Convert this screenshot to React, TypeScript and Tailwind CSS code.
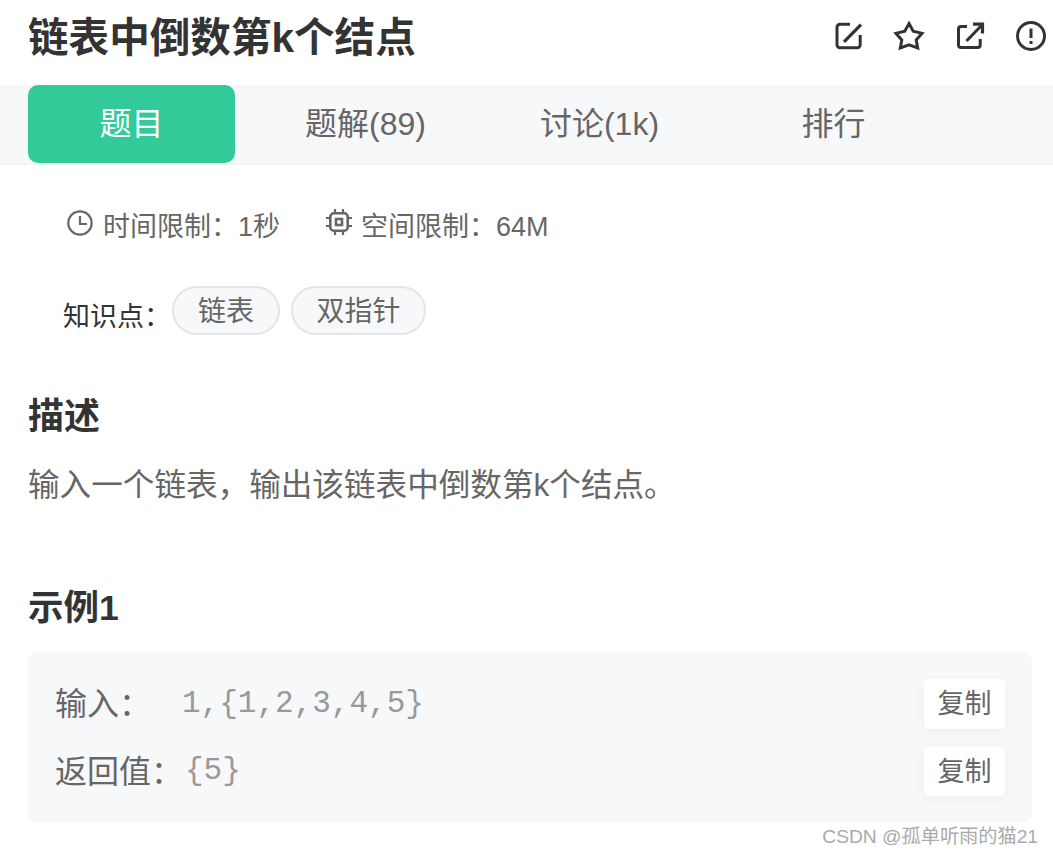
import React from "react";

function IconEdit() {
  return (
    <svg width="32" height="32" viewBox="0 0 32 32" fill="none" stroke="#333" strokeWidth="3">
      <path d="M18 4.2H8a3 3 0 0 0-3 3V24.8a3 3 0 0 0 3 3H25.2a3 3 0 0 0 3-3V15" />
      <path d="M12 21.8L29 4.6" strokeWidth="3.2" />
    </svg>
  );
}
function IconStar() {
  return (
    <svg width="32" height="32" viewBox="0 0 32 32" fill="none" stroke="#333" strokeWidth="3">
      <path d="M16 3.6L20.2 11.2L29 13.4L23.2 20L24.7 28L16 24.8L7.3 28L8.8 20L3 13.4L11.8 11.2Z" />
    </svg>
  );
}
function IconShare() {
  return (
    <svg width="32" height="32" viewBox="0 0 32 32" fill="none" stroke="#333" strokeWidth="3">
      <path d="M13 6.5H7a2.5 2.5 0 0 0-2.5 2.5V25a2.5 2.5 0 0 0 2.5 2.5H23.7a2.5 2.5 0 0 0 2.5-2.5V19" />
      <path d="M12.5 21L27 6" />
      <path d="M19 4.2H28.5V13.5" strokeWidth="3.2" />
    </svg>
  );
}
function IconAlert() {
  return (
    <svg width="32" height="32" viewBox="0 0 32 32" fill="none" stroke="#333" strokeWidth="3">
      <circle cx="16" cy="16" r="13.5" />
      <path d="M16 8.5V18" />
      <path d="M16 21v3" />
    </svg>
  );
}
function IconClock() {
  return (
    <svg width="26" height="26" viewBox="0 0 26 26" fill="none" stroke="#666" strokeWidth="2.2">
      <circle cx="13" cy="13" r="11.7" />
      <path d="M13 6V14H20" />
    </svg>
  );
}
function IconChip() {
  return (
    <svg width="26" height="26" viewBox="0 0 26 26" fill="none" stroke="#666" strokeWidth="2.6">
      <rect x="4.3" y="4.3" width="17.4" height="17.4" rx="3.5" />
      <rect x="10" y="10" width="6" height="6" />
      <path d="M9 0V3M17 0V3M9 23v3M17 23v3M0 9H3M0 17H3M23 9h3M23 17h3" strokeWidth="2.2" />
    </svg>
  );
}

function Tab({ label, width, active }: { label: string; width: string; active?: boolean }) {
  return (
    <div
      className={
        active
          ? "flex h-[78px] w-[207px] items-center justify-center rounded-[10px] bg-[#32ca99] text-[32px] text-white"
          : `flex h-[78px] ${width} items-center justify-center text-[32px] text-[#666]`
      }
    >
      {label}
    </div>
  );
}

function CopyBtn({ h }: { h: string }) {
  return (
    <div className={`flex ${h} w-[81px] shrink-0 items-center justify-center rounded-[5px] bg-white pt-[1px] text-[27px] text-[#666] shadow-[0_3px_10px_rgba(0,0,0,0.04)]`}>
      复制
    </div>
  );
}

export default function App() {
  return (
    <div className="relative h-[856px] w-[1053px] overflow-hidden bg-white font-['Liberation_Sans','Noto_Sans_CJK_SC',sans-serif] text-[#333]">
      <header className="flex h-[85px] items-start justify-between pl-[28px] pr-[6px]">
        <h1 className="pt-[13px] text-[40.6px] font-bold leading-[50px]">链表中倒数第k个结点</h1>
        <div className="flex gap-[29px] pt-[20px]">
          <IconEdit />
          <IconStar />
          <IconShare />
          <IconAlert />
        </div>
      </header>

      <nav className="flex h-[80px] border-b border-[#eef0f2] bg-[#f7f8fa] pl-[28px]">
        <Tab label="题目" width="" active />
        <Tab label="题解(89)" width="w-[261px]" />
        <Tab label="讨论(1k)" width="w-[207px]" />
        <Tab label="排行" width="w-[261px]" />
      </nav>

      <section className="flex items-start pl-[67px] pt-[44px] text-[27px] leading-[36px] text-[#666]">
        <span className="mt-[1px] block"><IconClock /></span>
        <span className="ml-[10px]">时间限制：1秒</span>
        <span className="ml-[46px] block"><IconChip /></span>
        <span className="ml-[9px]">空间限制：64M</span>
      </section>

      <section className="flex items-start pl-[63px] pt-[41px]">
        <span className="pt-[13px] text-[27px] leading-[36px]">知识点：</span>
        <div className="ml-[1px] flex gap-[11px]">
          <span className="flex h-[49px] w-[108px] items-center justify-center rounded-full border-2 border-[#e3e5e8] bg-[#f7f8fa] pt-[2px] text-[28px] text-[#666]">链表</span>
          <span className="flex h-[49px] w-[135px] items-center justify-center rounded-full border-2 border-[#e3e5e8] bg-[#f7f8fa] pt-[2px] text-[28px] text-[#666]">双指针</span>
        </div>
      </section>

      <section className="px-[28px]">
        <h2 className="pt-[55px] text-[36px] font-bold leading-[54px]">描述</h2>
        <p className="pt-[16px] text-[31.6px] leading-[50px] text-[#666]">输入一个链表，输出该链表中倒数第k个结点。</p>
        <h2 className="pt-[71px] text-[35.5px] font-bold leading-[54px]">示例1</h2>

        <div className="mt-[17px] h-[171px] w-[1004px] rounded-[10px] bg-[#f7f8fa] pl-[27px] pr-[27px] pt-[27px]">
          <div className="flex h-[50px] items-center justify-between">
            <div className="flex items-center">
              <span className="w-[127px] text-[32px] text-[#666]">输入：</span>
              <span className="font-['Liberation_Mono',monospace] text-[31px] text-[#999]">1,{"{"}1,2,3,4,5{"}"}</span>
            </div>
            <CopyBtn h="h-[50px]" />
          </div>
          <div className="mt-[18px] flex h-[49px] items-center justify-between">
            <div className="flex items-center">
              <span className="w-[130px] text-[32px] text-[#666]">返回值：</span>
              <span className="font-['Liberation_Mono',monospace] text-[31px] text-[#999]">{"{"}5{"}"}</span>
            </div>
            <CopyBtn h="h-[49px]" />
          </div>
        </div>
      </section>

      <div className="absolute bottom-[6px] right-[15px] text-[19.2px] leading-[26px] text-[#aaa]">CSDN @孤单听雨的猫21</div>
    </div>
  );
}
